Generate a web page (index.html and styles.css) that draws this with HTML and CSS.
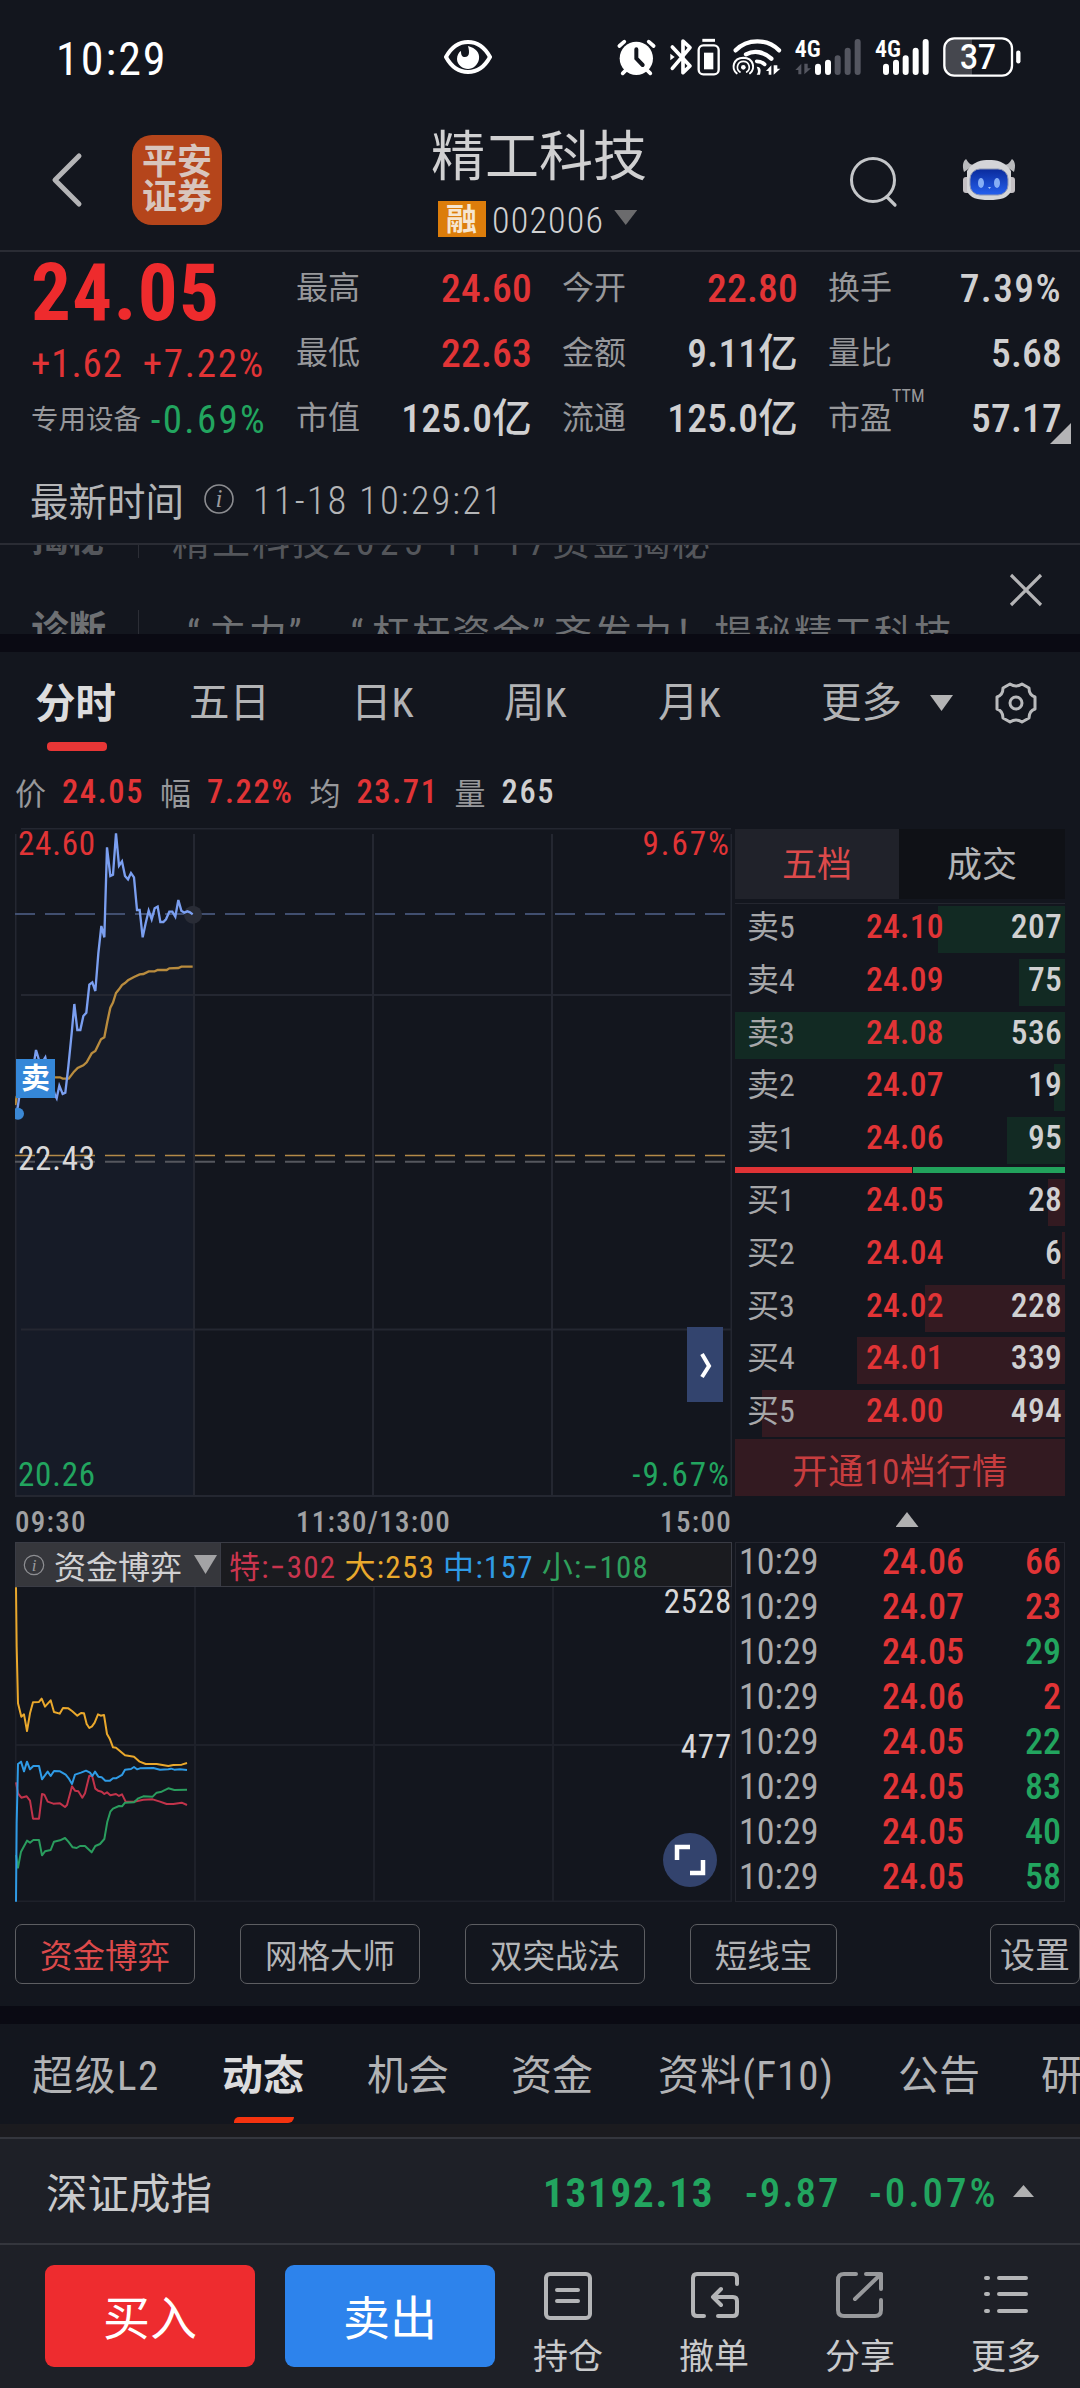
FILE: index.html
```html
<!DOCTYPE html>
<html lang="zh-CN">
<head>
    <meta charset="utf-8">
    <title>精工科技 002006</title>
    <link rel="stylesheet" href="styles.css">
</head>
<body>
    <div class="status-bar">
        <span class="clock">10:29</span>
        <svg class="eye" width="48" height="34" viewBox="0 0 48 34">
            <path d="M2 17C8 6 16 2 24 2s16 4 22 15c-6 11-14 15-22 15S8 28 2 17z" fill="none" stroke="#fff" stroke-width="4"/>
            <path d="M24 6c8 2 12 7 11 13-1 6-6 10-11 10s-11-4-11-10c0-4 2-7 4-8 0 4 1 6 4 6 4 0 5-4 3-11z" fill="#fff"/>
        </svg>
        <svg class="status-icons" width="460" height="75" viewBox="0 0 1380 225">
            <!-- alarm -->
            <g stroke="#fff" stroke-width="11" stroke-linecap="round" fill="none">
                <circle cx="139" cy="115" r="50" fill="#fff" stroke="none"/>
                <path d="M88 78l15-13M191 78l-15-13M98 160l12-12M181 160l-12-12"/>
                <path d="M139 88v27l19 20" stroke="#13161e" stroke-width="12"/>
            </g>
            <!-- bluetooth + device battery -->
            <path d="M247 81l53 57-21 20V63l21 20-53 62" fill="none" stroke="#fff" stroke-width="11" stroke-linejoin="round" stroke-linecap="round"/>
            <path d="M241 101l13 10-13 10z" fill="#fff"/>
            <rect x="326" y="76" width="60" height="87" rx="14" fill="none" stroke="#fff" stroke-width="7"/>
            <rect x="342" y="98" width="28" height="50" fill="#fff"/>
            <path d="M337 61h38" stroke="#fff" stroke-width="9"/>
            <!-- wifi hotspot -->
            <g fill="none" stroke="#fff" stroke-linecap="round">
                <path d="M437 91c34-36 96-36 130 0" stroke-width="13"/>
                <path d="M468 103c25-13 54-8 76 13" stroke-width="13"/>
                <path d="M500 124c10 0 18 3 24 9" stroke-width="11"/>
                <path d="M440 160c-16-14-12-46 20-47 32 1 36 33 20 47" stroke-width="6"/>
                <path d="M450 156c-14-10-8-32 10-32s24 22 10 32" stroke-width="5"/>
            </g>
            <circle cx="460" cy="142" r="7" fill="#fff"/>
            <path d="M500 140c12 0 14 8 10 24h-10c6-8 4-14 0-24zM544 164v-28l-16 17h8v11zM551 136v28l20-18h-9v-10z" fill="#fff"/>
            <!-- sim 1 -->
            <text class="net" x="614" y="110" textLength="78" lengthAdjust="spacingAndGlyphs">4G</text>
            <path d="M634 163v-32l-18 19h9v13zM643 131v32l20-18h-10v-14z" fill="#545660"/>
            <g stroke-width="18" stroke-linecap="round" stroke="#fff">
                <path d="M684 140v16M714 128v28"/>
                <path d="M743 115v41M773 92v64M803 66v90" stroke="#545660"/>
                <path d="M888 140v16M918 128v28M947 115v41M977 92v64M1007 66v90"/>
            </g>
            <!-- sim 2 -->
            <text class="net" x="855" y="110" textLength="78" lengthAdjust="spacingAndGlyphs">4G</text>
            <!-- battery -->
            <path d="M1146 56h-54c-18 0-28 12-28 28v56c0 18 12 26 28 26h54z" fill="#45474e"/>
            <rect x="1063" y="55" width="203" height="112" rx="30" fill="none" stroke="#fff" stroke-width="7"/>
            <path d="M1285 98v26" stroke="#fff" stroke-width="13" stroke-linecap="round"/>
            <text class="level" x="1164" y="146" text-anchor="middle" textLength="108" lengthAdjust="spacingAndGlyphs">37</text>
        </svg>
    </div>

    <div class="header">
        <svg class="back" width="34" height="56" viewBox="0 0 34 56"><path d="M29 4L5 28l24 24" fill="none" stroke="#b4b4b6" stroke-width="5" stroke-linecap="round" stroke-linejoin="round"/></svg>
        <div class="broker"><span>平安</span><span>证券</span></div>
        <div class="title">
            <div class="stock-name">精工科技</div>
            <div class="stock-code"><span class="margin-tag">融</span><span>002006</span><i class="tri-down"></i></div>
        </div>
        <svg class="search" width="50" height="54" viewBox="0 0 50 54"><circle cx="25" cy="25" r="21.5" fill="none" stroke="#c4c6c9" stroke-width="3"/><path d="M39 42l8 8" stroke="#c4c6c9" stroke-width="3.2" stroke-linecap="round"/></svg>
        <svg class="robot" width="54" height="44" viewBox="0 0 54 44">
            <defs><linearGradient id="face" x1="0" y1="0" x2="0" y2="1"><stop offset="0" stop-color="#0a2b9c"/><stop offset="1" stop-color="#2560ee"/></linearGradient></defs>
            <path d="M2 14C0 8 1 3 4 1c2 3 4 6 8 6zM52 14c2-6 1-11-2-13-2 3-4 6-8 6z" fill="#b9babd"/>
            <rect x="1" y="19" width="8" height="16" rx="3" fill="#c3bfc3"/><rect x="45" y="19" width="8" height="16" rx="3" fill="#c3bfc3"/>
            <path d="M5 13C11 3 20 2 27 2s16 1 22 11v20c-3 7-10 9-22 9S8 40 5 33z" fill="#d4d5d8"/>
            <rect x="8" y="11" width="38" height="26" rx="10" fill="url(#face)" stroke="#8a94b4"/>
            <ellipse cx="19" cy="25" rx="3" ry="5" fill="#86aef5"/><ellipse cx="35" cy="25" rx="3" ry="5" fill="#86aef5"/>
            <path d="M26 29h3l-1.500 2z" fill="#9fc0fa"/>
        </svg>
    </div>

    <div class="quote">
        <div class="price-box">
            <div class="price">24.05</div>
            <div class="change"><span>+1.62</span><span class="pct">+7.22%</span></div>
            <div class="sector"><span class="sector-name">专用设备</span><span class="green pct">-0.69%</span></div>
        </div>
        <div class="stats">
            <div class="stat"><label>最高</label><b class="red">24.60</b></div>
            <div class="stat"><label>今开</label><b class="red">22.80</b></div>
            <div class="stat"><label>换手</label><b class="pct">7.39%</b></div>
            <div class="stat"><label>最低</label><b class="red">22.63</b></div>
            <div class="stat"><label>金额</label><b>9.11亿</b></div>
            <div class="stat"><label>量比</label><b>5.68</b></div>
            <div class="stat"><label>市值</label><b>125.0亿</b></div>
            <div class="stat"><label>流通</label><b>125.0亿</b></div>
            <div class="stat"><label>市盈<sup>TTM</sup></label><b>57.17</b></div>
        </div>
        <i class="corner"></i>
    </div>

    <div class="time-row">
        <span class="time-label">最新时间</span>
        <svg width="32" height="32" viewBox="0 0 32 32"><circle cx="16" cy="16" r="14" fill="none" stroke="#8b8c90" stroke-width="1.600"/><text class="info-i" x="16" y="24" text-anchor="middle">i</text></svg>
        <span class="time-value">11-18 10:29:21</span>
    </div>

    <div class="news">
        <div class="news-list">
            <div class="news-item first"><b>揭秘</b><span>精工科技<em>2025-11-17</em>资金揭秘</span></div>
            <div class="news-item"><b>诊断</b><span class="quoted"><em class="q">“</em>主力<em class="q">”</em>、<em class="q">“</em>杠杆资金<em class="q">”</em>齐发力！揭秘精工科技</span></div>
        </div>
        <svg class="close" width="34" height="34" viewBox="0 0 34 34"><path d="M2 2l30 30M32 2L2 32" stroke="#b4b4b6" stroke-width="3.200"/></svg>
    </div>

    <div class="band"></div>

    <div class="tabs">
        <span class="active">分时</span>
        <span>五日</span>
        <span>日K</span>
        <span>周K</span>
        <span>月K</span>
        <span>更多</span>
        <i class="tri-down light"></i>
        <svg width="44" height="44" viewBox="0 0 44 44" fill="none" stroke="#b9babc" stroke-width="3">
            <path d="M16 3q6 4 12 0l7 4q0 7 6 9v12q-6 2-6 9l-7 4q-6-4-12 0l-7-4q0-7-6-9V16q6-2 6-9z" stroke-linejoin="round"/>
            <circle cx="22" cy="22" r="6"/>
        </svg>
    </div>

    <div class="figures">
        <label>价</label><b class="red">24.05</b>
        <label>幅</label><b class="red">7.22%</b>
        <label>均</label><b class="red">23.71</b>
        <label>量</label><b>265</b>
    </div>

    <div class="main">
        <div class="left">
            <!-- price chart -->
            <svg class="chart" width="717" height="669" viewBox="15 828 717 669">
                <path class="area" d="M16 1112L18 1097L34 1058L36 1050L45 1057L57 1098L62 1093L68 1067L74 1004L77 1030L83 1016L89 985L95 990L101 926L104 937L107 847L113 875L116 833L122 861L128 879L134 877L137 910L143 937L149 911L155 908L161 922L169 912L178 900L183 913L193 914V1496H16z"/>
                <path class="grid" d="M21 828.500H731M21 995H731M21 1329.500H731M15 1496H732M15.500 834V1496M194 834V1496M373 834V1496M552 834V1496M731.500 834V1496"/>
                <path d="M15 914H732" stroke="#414f70" stroke-width="2" stroke-dasharray="20 10"/>
                <path d="M15 1161.700H732" stroke="#55575e" stroke-width="2" stroke-dasharray="20 10"/>
                <path d="M15 1155.500H732" stroke="#b48a48" stroke-width="1.400" stroke-dasharray="20 10"/>
                <g transform="translate(0 820) scale(.33333)" fill="none" stroke-width="7">
                    <path stroke="#b98c3e" d="M46 855L50 830L100 790L165 772L180 772L188 776L206 776L222 755L233 744L250 736L260 727L275 700L286 693L303 658L313 652L322 605L331 563L339 548L348 519L357 508L366 495L375 489L384 481L402 471L419 463L430 462L446 454L464 454L473 450L500 450L508 445L535 444L544 440L578 440"/>
                    <circle cx="579" cy="284" r="27" fill="#292c36"/>
                    <path stroke="#7b9ff0" d="M48 875L53 862L58 830L74 828L100 740L108 690L117 720L130 722L136 712L146 760L165 825L170 835L178 797L188 822L196 818L205 740L215 640L223 552L232 630L241 630L250 588L259 578L268 494L277 487L286 513L295 400L304 318L313 352L321 82L331 168L339 164L348 40L357 137L366 124L375 168L384 178L393 159L402 172L411 270L419 270L428 352L437 310L446 272L455 298L464 265L473 260L481 306L490 306L498 298L508 275L517 275L526 290L535 240L544 272L553 278L562 274L570 277L578 283"/>
                </g>
                <circle cx="18" cy="1113.700" r="6" fill="#3b88d4"/>
                <rect x="16" y="1059" width="39" height="39" fill="#3587d8"/>
                <text x="35.500" y="1089" class="sell-mark" text-anchor="middle">卖</text>
                <g class="axis">
                    <text x="18" y="855" class="f-red">24.60</text>
                    <text x="18" y="1170" class="f-white">22.43</text>
                    <text x="18" y="1486" class="f-green">20.26</text>
                    <text x="731" y="855" class="f-red pct" text-anchor="end">9.67%</text>
                    <text x="731" y="1486" class="f-green pct" text-anchor="end">-9.67%</text>
                </g>
                <rect x="687" y="1327" width="36" height="75" fill="#33446e"/>
                <path d="M702 1354l7 12-7 11" fill="none" stroke="#fff" stroke-width="4"/>
            </svg>
            <div class="hours"><span>09:30</span><span>11:30/13:00</span><span>15:00</span></div>
            <div class="flow-head">
                <div class="flow-select">
                    <svg width="22" height="22" viewBox="0 0 22 22"><circle cx="11" cy="11" r="9.700" fill="none" stroke="#8e8f93" stroke-width="1.200"/><text class="info-i small" x="11" y="16.500" text-anchor="middle">i</text></svg>
                    <span>资金博弈</span><i class="tri-down big"></i>
                </div>
                <span class="f-te">特:−302</span><span class="f-da">大:253</span><span class="f-zhong">中:157</span><span class="f-xiao">小:−108</span>
            </div>
            <!-- money flow chart -->
            <svg class="chart" width="717" height="315" viewBox="15 1587 717 315">
                <path class="grid faint" d="M15.500 1587V1901.500H731.500V1587M15 1745H732M195 1587V1901M374 1587V1901M553 1587V1901"/>
                <g transform="translate(0 1530) scale(.33333)" fill="none" stroke-width="6" stroke-linejoin="round">
                    <path stroke="#c2334b" d="M48 757L54 790L64 803L80 799L90 812L99 866L117 866L126 792L133 794L143 815L160 821L180 820L195 831L201 825L216 769L225 782L235 784L247 803L255 790L268 737L277 740L286 776L294 782L305 785L313 792L321 787L331 796L348 792L357 798L366 793L377 815L402 815L430 809L458 808L480 815L500 822L520 822L545 818L561 825"/>
                    <path stroke="#2a9d5e" d="M48 975L54 1013L63 965L81 932L90 938L100 930L117 930L126 976L135 964L152 960L162 935L180 931L195 924L205 935L218 952L230 954L240 948L255 948L275 967L286 948L300 942L313 927L322 875L331 845L339 836L357 828L366 829L375 818L402 817L415 805L430 799L458 800L470 788L485 785L505 775L523 780L561 779"/>
                    <path stroke="#2f9be6" d="M48 1115L50 880L54 702L63 695L72 724L81 695L90 718L100 708L117 708L126 748L143 725L152 738L162 723L180 724L197 734L206 745L216 762L225 734L243 728L258 722L270 728L277 738L285 725L295 740L305 742L316 752L330 752L339 745L348 745L366 735L375 719L393 717L402 711L411 718L420 715L460 714L480 719L505 718L513 716L523 719L540 718L561 720"/>
                    <path stroke="#eaa82c" d="M48 172L50 350L54 520L64 560L72 553L81 603L90 550L99 517L117 516L125 506L135 530L152 511L162 546L179 551L189 534L205 535L216 543L232 557L243 549L252 550L260 582L268 594L276 589L284 578L294 553L302 557L312 555L321 612L330 628L339 652L348 653L375 676L402 680L419 695L437 702L470 702L505 708L520 705L545 704L561 699"/>
                </g>
                <g class="axis">
                    <text x="732" y="1613" class="f-white" text-anchor="end">2528</text>
                    <text x="732" y="1758" class="f-white" text-anchor="end">477</text>
                </g>
                <circle cx="690" cy="1860" r="27" fill="#33436d"/>
                <path d="M677 1860v-13h13M703 1860v13h-13" fill="none" stroke="#fff" stroke-width="4.500"/>
            </svg>
        </div>

        <div class="right">
            <div class="depth-tabs"><span class="on">五档</span><span>成交</span></div>
            <div class="depth">
                <div class="level-row"><i class="vol sell" style="width:127px"></i><label>卖5</label><b class="red">24.10</b><b>207</b></div>
                <div class="level-row"><i class="vol sell" style="width:46px"></i><label>卖4</label><b class="red">24.09</b><b>75</b></div>
                <div class="level-row"><i class="vol sell" style="width:330px"></i><label>卖3</label><b class="red">24.08</b><b>536</b></div>
                <div class="level-row"><i class="vol sell" style="width:11px"></i><label>卖2</label><b class="red">24.07</b><b>19</b></div>
                <div class="level-row"><i class="vol sell" style="width:58px"></i><label>卖1</label><b class="red">24.06</b><b>95</b></div>
                <div class="ratio"><i class="buy-part"></i><i class="sell-part"></i></div>
                <div class="level-row"><i class="vol buy" style="width:17px"></i><label>买1</label><b class="red">24.05</b><b>28</b></div>
                <div class="level-row"><i class="vol buy" style="width:3px"></i><label>买2</label><b class="red">24.04</b><b>6</b></div>
                <div class="level-row"><i class="vol buy" style="width:140px"></i><label>买3</label><b class="red">24.02</b><b>228</b></div>
                <div class="level-row"><i class="vol buy" style="width:208px"></i><label>买4</label><b class="red">24.01</b><b>339</b></div>
                <div class="level-row"><i class="vol buy" style="width:303px"></i><label>买5</label><b class="red">24.00</b><b>494</b></div>
            </div>
            <div class="open-ten">开通10档行情</div>
            <div class="fold"><i class="tri-up"></i></div>
            <div class="deals">
                <div class="deal"><span>10:29</span><b class="red">24.06</b><b class="red">66</b></div>
                <div class="deal"><span>10:29</span><b class="red">24.07</b><b class="red">23</b></div>
                <div class="deal"><span>10:29</span><b class="red">24.05</b><b class="green">29</b></div>
                <div class="deal"><span>10:29</span><b class="red">24.06</b><b class="red">2</b></div>
                <div class="deal"><span>10:29</span><b class="red">24.05</b><b class="green">22</b></div>
                <div class="deal"><span>10:29</span><b class="red">24.05</b><b class="green">83</b></div>
                <div class="deal"><span>10:29</span><b class="red">24.05</b><b class="green">40</b></div>
                <div class="deal"><span>10:29</span><b class="red">24.05</b><b class="green">58</b></div>
            </div>
        </div>
    </div>

    <div class="chips">
        <span class="chip on">资金博弈</span>
        <span class="chip">网格大师</span>
        <span class="chip">双突战法</span>
        <span class="chip short">短线宝</span>
        <span class="chip setting">设置</span>
    </div>

    <div class="band"></div>

    <div class="sections">
        <span>超级L2</span>
        <span class="active">动态</span>
        <span>机会</span>
        <span>资金</span>
        <span>资料(F10)</span>
        <span>公告</span>
        <span>研</span>
    </div>
    <div class="strip"></div>

    <div class="index-row">
        <span class="index-name">深证成指</span>
        <b class="index-value">13192.13</b>
        <b class="index-diff">-9.87</b>
        <b class="index-pct">-0.07%</b>
        <i class="tri-up small"></i>
    </div>

    <div class="actions">
        <div class="btn buy-btn">买入</div>
        <div class="btn sell-btn">卖出</div>
        <div class="tool">
            <svg width="50" height="50" viewBox="0 0 50 50"><rect x="3" y="3" width="44" height="44" rx="4"/><path d="M14 19h21M14 30h21"/></svg>
            <span>持仓</span>
        </div>
        <div class="tool">
            <svg width="50" height="50" viewBox="0 0 50 50"><path d="M48 13V7q0-4-4-4H8q-4 0-4 4v34q0 4 4 4h7M29 45h15q4 0 4-4V30q0-4-4-4H25M32 18l-8 8 8 8"/></svg>
            <span>撤单</span>
        </div>
        <div class="tool share">
            <svg width="50" height="50" viewBox="0 0 50 50"><path d="M21 3H9Q3 3 3 9v30q0 6 6 6h31q6 0 6-6V29M31 3h15v15M46 3L20 28"/></svg>
            <span>分享</span>
        </div>
        <div class="tool">
            <svg width="50" height="50" viewBox="0 0 50 50"><path d="M5 7h2M18 7h27M5 23h2M18 23h27M5 40h2M18 40h27"/></svg>
            <span>更多</span>
        </div>
    </div>
</body>
</html>
```
FILE: styles.css
```css
:root {
    --bg: #13161e;
    --red: #e13436;
    --green: #22a55f;
    --text: #d0d0d1;
    --muted: #97989b;
    --line: #24262f;
}

* {
    box-sizing: border-box;
}

body {
    width: 1080px;
    height: 2388px;
    margin: 0;
    overflow: hidden;
    background: var(--bg);
    color: var(--text);
    font-family: "Roboto Condensed", "Noto Sans CJK SC", sans-serif;
    white-space: nowrap;
}

b {
    font-weight: 500;
}

i, em {
    font-style: normal;
}

svg {
    display: block;
    flex: none;
}

.red { color: var(--red); }
.green { color: var(--green); }

.tri-down, .tri-up {
    display: block;
    width: 23px;
    height: 15px;
    background: #6b6b6d;
    clip-path: polygon(0 0, 100% 0, 50% 100%);
}

.tri-down.light { height: 16px; background: #b4b4b5; }
.tri-down.big { height: 19px; background: #a3a3a5; }

.tri-up {
    background: #b0b0b1;
    clip-path: polygon(50% 0, 100% 100%, 0 100%);
}

.tri-up.small { width: 21px; height: 12px; margin-top: -4px; }

/* status bar */
.status-bar {
    display: flex;
    height: 115px;
    color: #fff;
}

.clock {
    width: 387px;
    padding-left: 56px;
    font-size: 46px;
    line-height: 118px;
    letter-spacing: 2px;
}

.eye { margin: 40px 0 0 57px; }
.status-icons { margin: 20px 0 0 98px; }

.net {
    font-size: 72px;
    font-weight: 600;
    fill: #fff;
}

.level {
    font-family: Roboto;
    font-size: 104px;
    font-weight: 500;
    fill: #fff;
}

/* header */
.header {
    display: flex;
    height: 137px;
    border-bottom: 2px solid #2a2c34;
}

.back { margin: 37px 0 0 50px; }

.broker {
    display: flex;
    flex-direction: column;
    justify-content: center;
    width: 90px;
    height: 90px;
    margin: 20px 0 0 48px;
    border-radius: 20px;
    background: #b5451b;
    color: #d8c5bd;
    font-size: 35px;
    font-weight: 700;
    line-height: 35px;
    text-align: center;
}

.title {
    width: 320px;
    margin: 10px 0 0 157px;
    text-align: center;
}

.stock-name {
    font-size: 54px;
    line-height: 66px;
}

.stock-code {
    display: flex;
    align-items: center;
    height: 36px;
    margin: 10px 0 0 59px;
    font-size: 36px;
    font-weight: 300;
    letter-spacing: 1.2px;
    line-height: 42px;
}

.stock-code > span + span { padding-top: 3px; }

.margin-tag {
    width: 48px;
    height: 36px;
    margin-right: 6px;
    background: #dc7d0b;
    color: #f6e6d0;
    font-size: 31px;
    font-weight: 600;
    line-height: 37px;
}

.stock-code .tri-down { margin: -3px 0 0 10px; }
.search { margin: 40px 0 0 149px; }
.robot { margin: 43px 0 0 64px; }

/* quote */
.quote {
    position: relative;
    display: flex;
    height: 203px;
}

.price-box {
    width: 265px;
    padding-left: 31px;
}

.price {
    height: 84px;
    color: #ee2b2d;
    font-size: 79px;
    font-weight: 700;
    line-height: 82px;
    letter-spacing: 1.3px;
}

.change {
    display: flex;
    justify-content: space-between;
    width: 234px;
    color: var(--red);
    font-size: 39px;
    line-height: 56px;
    letter-spacing: 0.9px;
}

.change .pct { letter-spacing: 1.7px; }

.sector {
    display: flex;
    justify-content: space-between;
    width: 236px;
    font-size: 39px;
    line-height: 56px;
}

.sector .pct { letter-spacing: 2.3px; }

.sector-name {
    color: var(--muted);
    font-size: 27.5px;
}

.stats {
    display: grid;
    grid-template-columns: 236px 236px 234px;
    grid-template-rows: repeat(3, 65px);
    column-gap: 30px;
    margin-left: 31px;
    padding-top: 3px;
}

.stat {
    display: flex;
    justify-content: space-between;
    font-size: 39.5px;
    line-height: 67px;
}

.stat label {
    color: var(--muted);
    font-size: 32px;
}

.stat b { letter-spacing: 0.2px; }
.stat b.pct { letter-spacing: 1.4px; }

.stat sup {
    font-size: 18px;
    line-height: 0;
    vertical-align: 27px;
}

.corner {
    position: absolute;
    right: 9px;
    top: 171px;
    width: 21px;
    height: 21px;
    background: #b4b4b6;
    clip-path: polygon(100% 0, 100% 100%, 0 100%);
}

/* latest time */
.time-row {
    display: flex;
    align-items: center;
    height: 88px;
    padding-left: 30px;
    color: #b4b5b7;
    font-size: 38.5px;
    font-weight: 300;
}

.time-label { font-weight: 400; }
.time-row svg { margin: -1px 18px 0 19px; }
.time-value { padding-top: 2px; letter-spacing: 2.1px; }

.info-i {
    font: italic 25px "Liberation Serif", serif;
    fill: #9a9b9e;
}

.info-i.small { font-size: 17px; }

/* news ticker */
.news {
    position: relative;
    height: 91px;
    border-top: 2px solid #2a2c34;
    overflow: hidden;
}

.news-list { margin-top: -53px; }

.news-item {
    display: flex;
    align-items: center;
    height: 92px;
    padding-left: 31px;
    color: #6e7073;
    font-size: 38px;
}

.news-item.first { color: #54565b; }

.news-item b {
    width: 108px;
    margin-right: 33px;
    border-right: 1px solid #2c2e36;
    font-size: 37.5px;
    font-weight: 700;
    line-height: 40px;
}

.news-item span { letter-spacing: 2px; }
.news-item em { letter-spacing: 5.1px; }
.news-item .q { letter-spacing: 9px; }
.news-item .quoted { margin-left: 15px; }

.close {
    position: absolute;
    right: 37px;
    top: 28px;
}

.band {
    height: 18px;
    background: #0a0a13;
}

/* period tabs */
.tabs {
    display: grid;
    grid-template-columns: 154px 162px 153px 154px 163px 109px 64px 44px;
    align-items: center;
    height: 100px;
    padding-left: 35px;
    color: #b2b3b5;
    font-size: 40.5px;
    line-height: 102px;
}

.tabs .active, .sections .active {
    color: #dcdcdd;
    font-weight: 700;
}

.tabs .active::after {
    content: "";
    display: block;
    width: 60px;
    height: 9px;
    margin: -13px 0 2px 12px;
    border-radius: 4px;
    background: #e83636;
}

.figures {
    display: flex;
    align-items: center;
    gap: 16px;
    height: 76px;
    padding: 4px 0 0 15px;
    font-size: 32.5px;
}

.figures label {
    color: var(--muted);
    font-size: 31px;
    margin-top: -2px;
}

.figures b { letter-spacing: 1.6px; }

/* charts */
.main {
    display: flex;
    height: 1074px;
    padding-left: 15px;
}

.left { width: 717px; }
.right { width: 330px; margin-left: 3px; }

.grid {
    fill: none;
    stroke: #242731;
    stroke-width: 2;
}

.grid.faint { stroke: #1e212a; }
.area { fill: #161b27; }

.axis text {
    font-size: 33px;
    font-weight: 400;
    letter-spacing: 0.8px;
}

.axis .pct { letter-spacing: 2px; }
.axis .f-red { fill: var(--red); }
.axis .f-green { fill: var(--green); }
.axis .f-white { fill: #d8d8d9; }

.sell-mark {
    font-size: 29px;
    font-weight: 700;
    fill: #fff;
}

.hours {
    display: grid;
    grid-template-columns: 1fr 1fr 1fr;
    height: 45px;
    color: #a0a1a3;
    font-size: 29px;
    font-weight: 500;
    line-height: 51px;
    letter-spacing: 1.3px;
}

.hours span:nth-child(2) { text-align: center; }
.hours span:nth-child(3) { text-align: right; }

.flow-head {
    display: flex;
    align-items: center;
    gap: 8px;
    height: 45px;
    border: 1px solid #3a3c45;
    background: #1a1b1f;
    font-size: 31px;
    font-weight: 400;
    letter-spacing: 1.3px;
}

.flow-select {
    display: flex;
    align-items: center;
    width: 205px;
    height: 43px;
    padding-left: 7px;
    border-right: 1px solid #3a3c45;
    background: #36373c;
    color: #d0d0d2;
    font-size: 32px;
    font-weight: 400;
    letter-spacing: 0;
}

.flow-select span { margin: 0 12px 0 9px; }
.f-te { color: #c9354e; }
.f-da { color: #e9a92c; }
.f-zhong { color: #2f9be6; }
.f-xiao { color: #2fa05c; }

/* order book */
.depth-tabs {
    display: flex;
    height: 75px;
    padding-top: 1px;
    border-bottom: 4px solid var(--bg);
    color: #b4b5b7;
    font-size: 35px;
    line-height: 74px;
    text-align: center;
}

.depth-tabs span {
    width: 166px;
    background: #0f1116;
}

.depth-tabs .on {
    width: 164px;
    background: #20222a;
    color: #dc4a4b;
}

.depth {
    padding-top: 2px;
    border-top: 1px solid var(--line);
    height: 536px;
}

.level-row {
    position: relative;
    display: grid;
    grid-template-columns: 119px 95px 1fr;
    height: 52.8px;
    padding: 0 3px 0 12px;
    font-size: 33.5px;
    line-height: 42px;
}

.level-row > * { position: relative; }

.level-row label {
    color: #a6a7a9;
    font-size: 32px;
    font-weight: 400;
}

.level-row b { letter-spacing: 0.3px; }
.level-row b:last-child { text-align: right; }

/* volume bar lies under the row's texts */
.level-row .vol {
    position: absolute;
    right: 0;
    top: 0;
    height: 47px;
}

.vol.sell { background: #122a23; }
.vol.buy { background: #331a21; }

.ratio {
    display: flex;
    gap: 1px;
    height: 6px;
    margin: -3px 0 6px;
}

.buy-part { width: 177px; background: #e03336; }
.sell-part { flex: 1; background: #22a25c; }

.open-ten {
    height: 57px;
    background: #331a21;
    color: #c73d3f;
    font-size: 35.5px;
    line-height: 66px;
    letter-spacing: 0.5px;
    text-align: center;
}

.fold {
    display: flex;
    justify-content: center;
    height: 46px;
    padding: 16px 0 0 14px;
}

.deals {
    height: 360px;
    border: 1px solid var(--line);
}

.deal {
    display: grid;
    grid-template-columns: 143px 84px 1fr;
    height: 45px;
    padding: 0 3px 0 3px;
    font-size: 36px;
    line-height: 38px;
}

.deal span { color: #a9aaac; }
.deal b:last-child { text-align: right; }

/* strategy chips */
.chips {
    display: flex;
    gap: 45px;
    height: 104px;
    padding: 22px 0 0 15px;
    font-size: 32.5px;
}

.chip {
    flex: none;
    width: 180px;
    height: 60px;
    border: 1px solid #5d5e62;
    border-radius: 7px;
    color: #b4b5b7;
    line-height: 64px;
    text-align: center;
}

.chip.on { color: #dc4a4b; }
.chip.short { width: 147px; }
.chip.setting { width: 90px; margin-left: 108px; font-size: 35px; }

/* section tabs */
.sections {
    display: grid;
    grid-template-columns: 190px 145px 144px 147px 240px 143px 60px;
    height: 100px;
    padding-left: 32px;
    overflow: hidden;
    color: #b2b3b5;
    font-size: 41px;
    line-height: 105px;
}

.sections span:nth-child(1) { letter-spacing: 1.5px; }
.sections span:nth-child(5) { letter-spacing: 1.1px; }

.sections .active::after {
    content: "";
    display: block;
    width: 60px;
    height: 6px;
    margin: -12px 0 0 12px;
    border-radius: 5px 0 6px 0;
    background: #f5330f;
}

.strip {
    height: 13px;
    background: #1b1b1f;
}

.index-row {
    display: flex;
    align-items: center;
    height: 106px;
    padding: 4px 45px 0 46px;
    border-top: 2px solid #34363d;
    background: #1e2027;
    color: var(--green);
    font-size: 41px;
}

.index-name {
    width: 497px;
    margin-top: -4px;
    color: #c9cacc;
    font-size: 41.5px;
}

.index-value {
    width: 202px;
    font-weight: 700;
    letter-spacing: 1.8px;
}

.index-diff { width: 124px; letter-spacing: 2px; }
.index-pct { width: 144px; letter-spacing: 3px; }

/* bottom actions */
.actions {
    display: flex;
    height: 145px;
    padding: 20px 0 0 45px;
    border-top: 2px solid #34363d;
    background: #1e2027;
}

.btn {
    width: 210px;
    height: 102px;
    margin-right: 30px;
    border-radius: 9px;
    color: #fff;
    font-size: 47px;
    line-height: 108px;
    text-align: center;
}

.buy-btn { background: #ee2c2f; }
.sell-btn { background: #2d83ec; }

.tool {
    display: flex;
    flex-direction: column;
    align-items: center;
    width: 146px;
    color: #c9cacc;
    font-size: 35px;
    line-height: 44px;
}

.btn + .tool { margin-left: -30px; }

.tool svg {
    margin: 6px 0 15px;
    fill: none;
    stroke: #b4b5b7;
    stroke-width: 4;
    stroke-linecap: round;
    stroke-linejoin: round;
}

.share svg { stroke: #98999c; }
```
